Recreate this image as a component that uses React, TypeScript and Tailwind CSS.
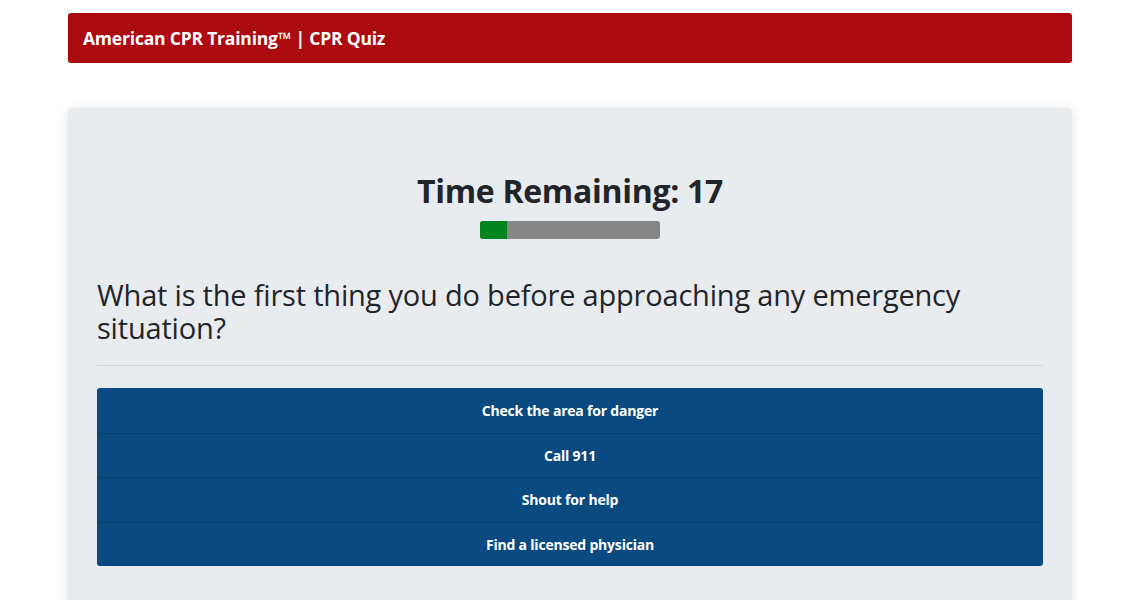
const answers = [
  "Check the area for danger",
  "Call 911",
  "Shout for help",
  "Find a licensed physician",
];

export default function App() {
  const remaining = 17;
  const pct = 15;

  return (
    <div className="min-h-screen bg-white" style={{ fontFamily: '"Open Sans", "Noto Sans", sans-serif' }}>
      <div className="mx-auto w-[1004px] pt-[13px]">
        {/* Header */}
        <div className="h-[50px] rounded-[3px] bg-[#ab0a10] px-[15px] flex items-center">
          <h1 className="text-white font-bold text-[17.5px] tracking-[-0.2px]">
            American CPR Training™ | CPR Quiz
          </h1>
        </div>

        {/* Quiz card */}
        <div className="mt-[45px] rounded-[4px] bg-[#e9ecef] shadow-[0_2px_12px_rgba(0,0,0,0.12)] px-[29px] pt-[64px] pb-[60px]">
          <div className="flex flex-col items-center">
            <h2 className="text-[32px] leading-[38px] font-bold text-[#212529] tracking-[-0.3px]">
              Time Remaining: {remaining}
            </h2>
            <div className="mt-[11px] w-[180px] h-[18px] rounded-[3px] bg-[#868686] overflow-hidden">
              <div className="h-full bg-[#00851f]" style={{ width: `${pct}%` }} />
            </div>
          </div>

          <h3 className="mt-[39px] text-[29px] leading-[33px] font-medium text-[#212529] tracking-[-0.2px]">
            What is the first thing you do before approaching any emergency situation?
          </h3>

          <hr className="mt-[21px] border-t border-[#d3d6d9]" />

          <div className="mt-[22px] rounded-[3px] overflow-hidden bg-[#0a4a80]">
            {answers.map((a, i) => (
              <button
                key={i}
                className={`w-full h-[44.5px] flex items-center justify-center text-white font-bold text-[14px] tracking-[-0.2px] ${
                  i > 0 ? "border-t border-[#083f6e]" : ""
                }`}
              >
                {a}
              </button>
            ))}
          </div>
        </div>
      </div>
    </div>
  );
}
